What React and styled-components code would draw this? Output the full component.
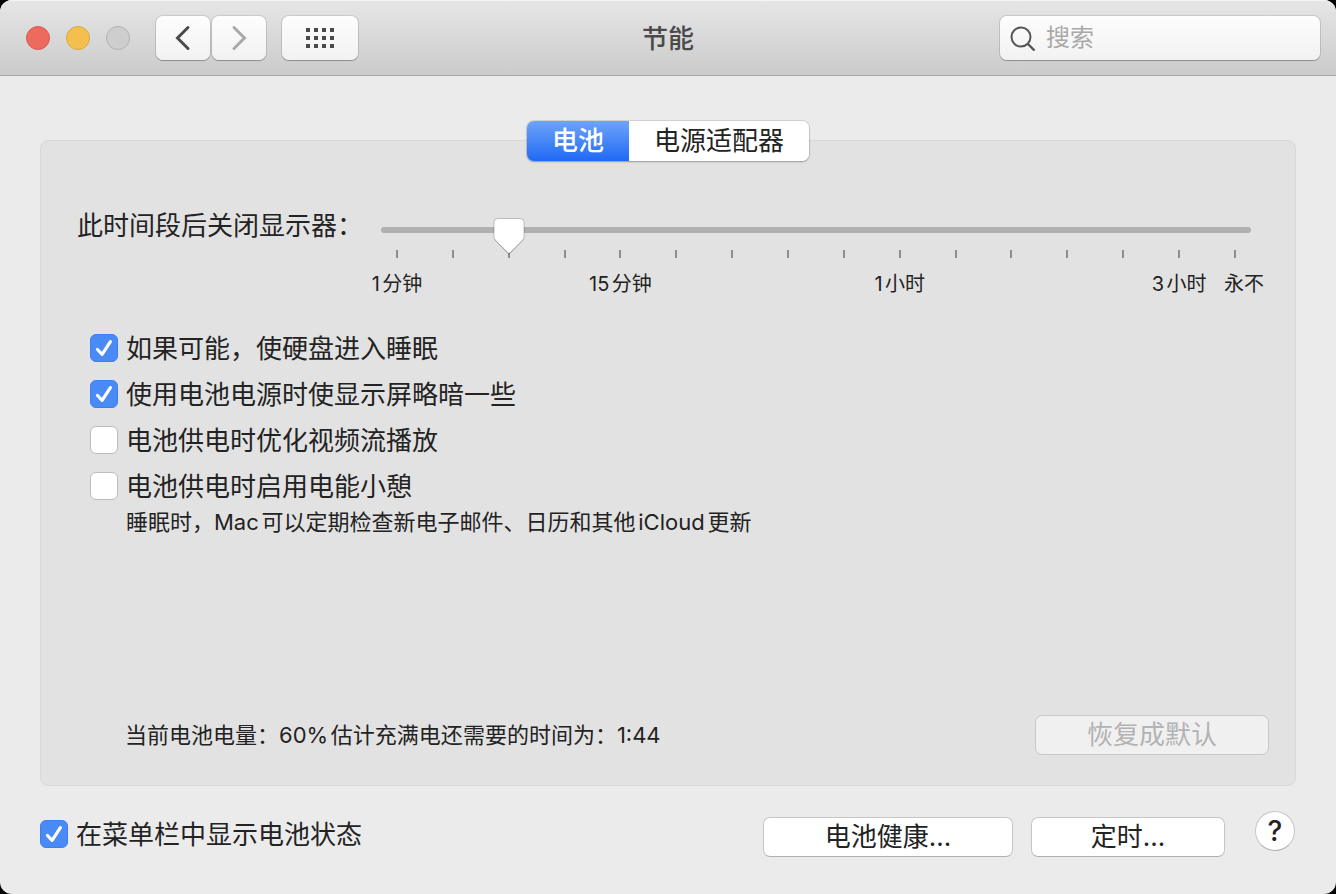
import React, { useState } from 'react';
import styled, { createGlobalStyle, css } from 'styled-components';

const svgUrl = (svg) => `url("data:image/svg+xml,${encodeURIComponent(svg)}")`;

const checkMark = svgUrl(
  '<svg xmlns="http://www.w3.org/2000/svg" viewBox="0 0 28 28"><path d="M7.5 15.5l4.6 4.8L20.4 7.6" fill="none" stroke="#fff" stroke-width="3.2" stroke-linecap="round" stroke-linejoin="round"/></svg>'
);

const thumbShape = svgUrl(
  '<svg xmlns="http://www.w3.org/2000/svg" viewBox="0 0 32 38"><path d="M5 1.5h22a4 4 0 0 1 4 4v14.2c0 1.3-.4 2.3-1.3 3.3L16.8 36.2c-.5.5-1.1.5-1.6 0L2.3 23c-.9-1-1.3-2-1.3-3.3V5.5a4 4 0 0 1 4-4z" fill="#000" fill-opacity=".18"/><path d="M5 .5h22a4 4 0 0 1 4 4v14.2c0 1.3-.4 2.3-1.3 3.3L16.8 35c-.5.5-1.1.5-1.6 0L2.3 22C1.4 21 1 20 1 18.7V4.500a4 4 0 0 1 4-4z" fill="#fff" stroke="#000" stroke-opacity=".22" stroke-width="1"/></svg>'
);

const GlobalStyle = createGlobalStyle`
  * {
    box-sizing: border-box;
  }

  html {
    background: #000;
  }

  body {
    margin: 0;
    color: #232323;
    font-family: Inter, 'Noto Sans CJK SC', sans-serif;
    font-size: 26px;
    text-autospace: normal;
  }

  button, input {
    margin: 0;
    padding: 0;
    font: inherit;
    color: inherit;
  }
`;

const Window = styled.div`
  display: flex;
  flex-direction: column;
  min-height: 100vh;
  overflow: hidden;
  border-radius: 12px;
  background: #ebebeb;
`;

const Toolbar = styled.header`
  display: grid;
  grid-template-columns: 1fr auto 1fr;
  align-items: center;
  height: 76px;
  padding: 0 16px;
  border-bottom: 1px solid #a6a6a6;
  background: linear-gradient(#e6e6e6, #cbcbcb);
  box-shadow: inset 0 1px 0 #f4f4f4;
`;

const ToolbarStart = styled.div`
  display: flex;
  align-items: center;
  gap: 16px;
  padding-left: 10px;
`;

const Light = styled.button`
  width: 24px;
  height: 24px;
  border: 1px solid ${(p) => p.$edge};
  border-radius: 50%;
  background: ${(p) => p.$fill};
`;

const NavGroup = styled.div`
  display: flex;
  gap: 2px;
  margin-left: 10px;
`;

const ToolButton = styled.button`
  display: flex;
  align-items: center;
  justify-content: center;
  width: ${(p) => (p.$wide ? 76 : 54)}px;
  height: 44px;
  border: 0;
  border-radius: 7px;
  background: linear-gradient(#fdfdfd, #f2f2f2);
  box-shadow: 0 0 0 1px rgba(0, 0, 0, 0.1), 0 1px 1px rgba(0, 0, 0, 0.25);
  color: ${(p) => (p.disabled ? '#a9a9a9' : '#4a4a4a')};
`;

const Title = styled.h1`
  margin: 0;
  padding-top: 2px;
  font-size: 26px;
  font-weight: 500;
  line-height: 36px;
  color: #4a4a4a;
`;

const Search = styled.label`
  display: flex;
  align-items: center;
  justify-self: end;
  gap: 10px;
  width: 100%;
  max-width: 320px;
  height: 44px;
  padding: 0 10px;
  border-radius: 7px;
  background: linear-gradient(#fdfdfd, #f2f2f2);
  box-shadow: 0 0 0 1px rgba(0, 0, 0, 0.1), 0 1px 1px rgba(0, 0, 0, 0.25);
`;

const SearchInput = styled.input`
  flex: 1;
  min-width: 0;
  border: 0;
  outline: 0;
  background: none;
  font-size: 24px;
  line-height: 36px;

  &::placeholder {
    color: #a9a9a9;
    opacity: 1;
  }
`;

const Content = styled.main`
  flex: 1;
  display: flex;
  flex-direction: column;
  padding: 64px 40px 0;
`;

const Panel = styled.section`
  flex: 1;
  display: flex;
  flex-direction: column;
  border: 1px solid #d8d8d8;
  border-radius: 8px;
  background: #e2e2e2;
`;

const Tabs = styled.div`
  display: flex;
  align-self: center;
  height: 40px;
  margin-top: -20px;
  border-radius: 7px;
  box-shadow: 0 0 0 1px rgba(0, 0, 0, 0.1), 0 1px 2px rgba(0, 0, 0, 0.25);
  overflow: hidden;
`;

const Tab = styled.button`
  padding: 0 25px;
  border: 0;
  background: #fff;
  line-height: 40px;

  ${(p) =>
    p.$active &&
    css`
      background: linear-gradient(#6ea4f8, #1f69f5);
      color: #fff;
      font-weight: 500;
    `}
`;

const SliderRow = styled.div`
  display: flex;
  gap: 18px;
  margin-top: 47px;
  padding: 0 44px 0 36px;
`;

const SliderLabel = styled.label`
  line-height: 36px;
  white-space: nowrap;
`;

const SliderColumn = styled.div`
  flex: 1;
  padding-top: 10px;
`;

/* sits above the tick marks so that the thumb's tip covers them */
const Range = styled.input`
  position: relative;
  z-index: 1;
  display: block;
  width: 100%;
  height: 24px;
  appearance: none;
  background: none;
  outline: 0;

  &::-webkit-slider-runnable-track {
    height: 6px;
    border-radius: 3px;
    background: #b0b0b0;
  }

  &::-webkit-slider-thumb {
    appearance: none;
    width: 32px;
    height: 38px;
    margin-top: -9px;
    background: ${thumbShape} center / 32px 38px no-repeat;
  }
`;

const Ticks = styled.div`
  display: flex;
  justify-content: space-between;
  height: 45px;
  margin-top: 8px;
  padding: 0 15px;
`;

const Tick = styled.div`
  display: flex;
  flex-direction: column;
  align-items: center;
  gap: 14px;
  width: 2px;

  &::before {
    content: '';
    flex: none;
    width: 2px;
    height: 8px;
    background: #8e8e8e;
  }
`;

const TickLabel = styled.span`
  padding-left: ${(p) => (p.$last ? 18 : 0)}px;
  font-size: 20px;
  line-height: 24px;
  white-space: nowrap;
`;

const Options = styled.div`
  margin-top: 30px;
  padding-left: 49px;
`;

const Option = styled.label`
  display: flex;
  align-items: center;
  gap: 8px;
  width: fit-content;
  height: 46px;
`;

const OptionText = styled.span`
  padding-top: 2px;
  line-height: 36px;
`;

const Check = styled.input`
  flex: none;
  width: 28px;
  height: 28px;
  appearance: none;
  border: 1px solid #bcbcbc;
  border-radius: 6px;
  background: #fff;

  &:checked {
    border-color: #3f7df0;
    background: #4a8af6 ${checkMark} center / 28px 28px no-repeat;
  }
`;

const Note = styled.p`
  margin: 0;
  padding-left: 36px;
  font-size: 22px;
  line-height: 26px;
`;

const StatusRow = styled.div`
  display: flex;
  align-items: center;
  justify-content: space-between;
  margin-top: auto;
  padding: 30px 26px 30px 84px;
  font-size: 22px;
  line-height: 26px;
`;

const PushButton = styled.button`
  width: ${(p) => p.$width}px;
  height: 40px;
  border: 1px solid #c6c6c6;
  border-bottom-color: #b0b0b0;
  border-radius: 7px;
  background: #fff;
  font-size: 26px;
  line-height: 38px;
  text-autospace: no-autospace;

  &:disabled {
    border-color: #c9c9c9;
    background: #f0f0f0;
    color: #b3b3b3;
  }
`;

const Footer = styled.footer`
  display: flex;
  align-items: flex-start;
  justify-content: space-between;
  padding: 25px 1px 37px 0;
`;

const FooterActions = styled.div`
  display: flex;
  gap: 18px;
  padding-top: 6px;
`;

const FooterEnd = styled.div`
  display: flex;
  align-items: flex-start;
  gap: 30px;
`;

const HelpButton = styled.button`
  width: 40px;
  height: 40px;
  border: 1px solid #c6c6c6;
  border-bottom-color: #b0b0b0;
  border-radius: 50%;
  background: #fff;
  font-size: 28px;
  font-weight: 500;
  line-height: 36px;
`;

const TICK_LABELS = { 0: '1分钟', 4: '15分钟', 9: '1小时', 14: '3小时', 15: '永不' };

const OPTIONS = [
  { id: 'disk', text: '如果可能，使硬盘进入睡眠', on: true },
  { id: 'dim', text: '使用电池电源时使显示屏略暗一些', on: true },
  { id: 'video', text: '电池供电时优化视频流播放', on: false },
  { id: 'nap', text: '电池供电时启用电能小憩', on: false },
];

const Chevron = ({ right }) => (
  <svg width="16" height="26" viewBox="0 0 16 26" fill="none" stroke="currentColor" strokeWidth="3" strokeLinecap="round" strokeLinejoin="miter">
    <path d={right ? 'M3 2.5L13.5 13L3 23.5' : 'M13 2.5L2.500 13L13 23.5'} />
  </svg>
);

const GridIcon = () => (
  <svg width="28" height="20" viewBox="0 0 28 20" fill="currentColor">
    {[0, 8, 16].map((y) => [0, 8, 16, 24].map((x) => <rect key={`${x}-${y}`} x={x} y={y} width="4" height="4" />))}
  </svg>
);

const SearchIcon = () => (
  <svg width="26" height="26" viewBox="0 0 26 26" fill="none" stroke="#555" strokeWidth="2">
    <circle cx="11" cy="12" r="9.5" />
    <path d="M17.5 18.5L24.5 25.5" strokeWidth="2.4" />
  </svg>
);

const CheckOption = ({ id, checked, children }) => (
  <Option htmlFor={id}>
    <Check id={id} type="checkbox" defaultChecked={checked} />
    <OptionText>{children}</OptionText>
  </Option>
);

const App = () => {
  const [tab, setTab] = useState('battery');
  const [delay, setDelay] = useState(2);

  return (
    <>
      <GlobalStyle />
      <Window lang="zh-CN">
        <Toolbar>
          <ToolbarStart>
            <Light aria-label="关闭" $fill="#ed6a5f" $edge="#dc5a4f" />
            <Light aria-label="最小化" $fill="#f5bf4f" $edge="#dba941" />
            <Light aria-label="缩放" $fill="#cecece" $edge="#b3b3b3" disabled />
            <NavGroup>
              <ToolButton aria-label="后退"><Chevron /></ToolButton>
              <ToolButton aria-label="前进" disabled><Chevron right /></ToolButton>
            </NavGroup>
            <ToolButton aria-label="显示全部" $wide><GridIcon /></ToolButton>
          </ToolbarStart>
          <Title>节能</Title>
          <Search>
            <SearchIcon />
            <SearchInput type="text" placeholder="搜索" aria-label="搜索" />
          </Search>
        </Toolbar>

        <Content>
          <Panel>
            <Tabs role="tablist">
              <Tab role="tab" aria-selected={tab === 'battery'} $active={tab === 'battery'} onClick={() => setTab('battery')}>
                电池
              </Tab>
              <Tab role="tab" aria-selected={tab === 'adapter'} $active={tab === 'adapter'} onClick={() => setTab('adapter')}>
                电源适配器
              </Tab>
            </Tabs>

            <SliderRow>
              <SliderLabel htmlFor="display-off">此时间段后关闭显示器：</SliderLabel>
              <SliderColumn>
                <Range
                  id="display-off"
                  type="range"
                  min="0"
                  max="15"
                  value={delay}
                  onChange={(e) => setDelay(Number(e.target.value))}
                />
                <Ticks>
                  {Array.from({ length: 16 }, (_, i) => (
                    <Tick key={i}>
                      {TICK_LABELS[i] && <TickLabel $last={i === 15}>{TICK_LABELS[i]}</TickLabel>}
                    </Tick>
                  ))}
                </Ticks>
              </SliderColumn>
            </SliderRow>

            <Options>
              {OPTIONS.map((o) => (
                <CheckOption key={o.id} id={o.id} checked={o.on}>
                  {o.text}
                </CheckOption>
              ))}
              <Note>睡眠时，Mac可以定期检查新电子邮件、日历和其他iCloud更新</Note>
            </Options>

            <StatusRow>
              <span>当前电池电量：60%估计充满电还需要的时间为：1:44</span>
              <PushButton $width={234} disabled>恢复成默认</PushButton>
            </StatusRow>
          </Panel>

          <Footer>
            <CheckOption id="menu-bar" checked>
              在菜单栏中显示电池状态
            </CheckOption>
            <FooterEnd>
              <FooterActions>
                <PushButton $width={250}>电池健康...</PushButton>
                <PushButton $width={194}>定时...</PushButton>
              </FooterActions>
              <HelpButton aria-label="帮助">?</HelpButton>
            </FooterEnd>
          </Footer>
        </Content>
      </Window>
    </>
  );
};

export default App;
